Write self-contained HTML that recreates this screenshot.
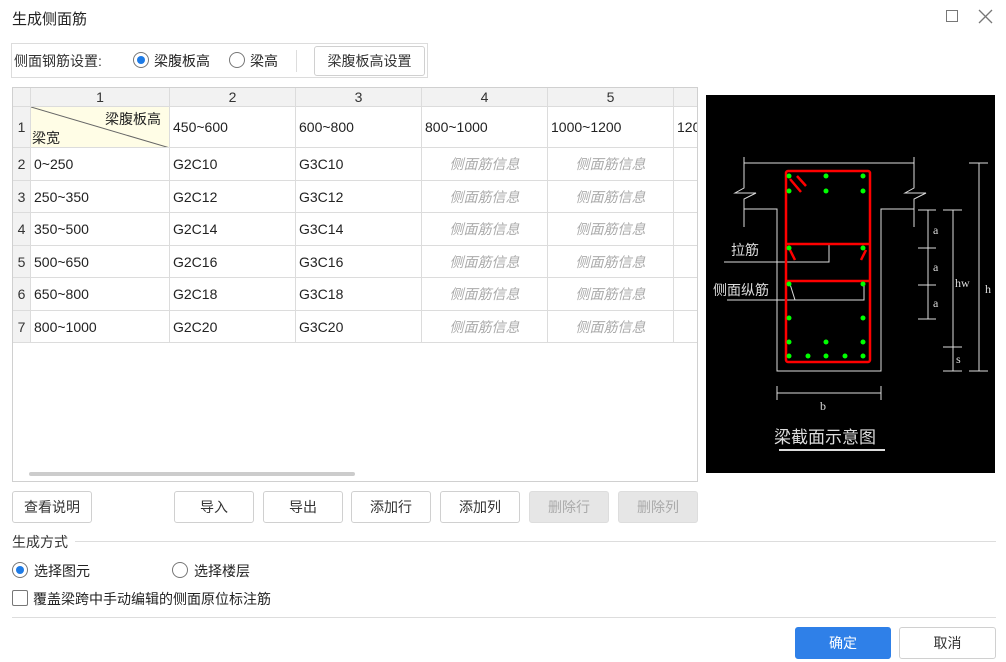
<!DOCTYPE html>
<html><head><meta charset="utf-8"><style>
*{box-sizing:border-box;margin:0;padding:0}
body{width:1006px;height:662px;background:#fff;position:relative;overflow:hidden;font-family:"Liberation Sans","Noto Sans CJK SC",sans-serif;font-size:14px;color:#222}
.a{position:absolute}
.btn{position:absolute;height:32px;border:1px solid #d0d0d0;border-radius:3px;background:#fff;text-align:center;line-height:30px;font-size:14px;color:#333}
.dis{background:#e6e6e6;color:#aaa;border-color:#ddd}
table{border-collapse:collapse;position:absolute;left:12px;top:87px;table-layout:fixed}
td{border:1px solid #dcdcdc;font-size:14px;padding:0 3px;white-space:nowrap;overflow:hidden}
td.h{background:#f2f2f2;text-align:center;color:#333;padding:0}
td.i{color:#aaa;font-style:italic;text-align:center}
.radio{position:absolute;width:16px;height:16px;border:1px solid #777;border-radius:50%;background:#fff}
.radio.on::after{content:"";position:absolute;left:3px;top:3px;width:8px;height:8px;border-radius:50%;background:#1e7be6}
</style></head><body>
<div class="a" style="left:12px;top:8px;font-size:15px;color:#222">生成侧面筋</div>
<div class="a" style="left:946px;top:10px;width:12px;height:12px;border:1px solid #777"></div>
<svg class="a" style="left:978px;top:9px" width="15" height="15"><path d="M1 1L14 14M14 1L1 14" stroke="#777" stroke-width="1.3"/></svg>

<div class="a" style="left:11px;top:43px;width:417px;height:35px;border:1px solid #dcdcdc"></div>
<div class="a" style="left:14px;top:51px;color:#333">侧面钢筋设置:</div>
<div class="radio on" style="left:133px;top:52px"></div>
<div class="a" style="left:154px;top:51px">梁腹板高</div>
<div class="radio" style="left:229px;top:52px"></div>
<div class="a" style="left:250px;top:51px">梁高</div>
<div class="a" style="left:296px;top:50px;width:1px;height:22px;background:#ddd"></div>
<div class="btn" style="left:314px;top:46px;width:111px;height:30px;line-height:28px">梁腹板高设置</div>

<div class="a" style="left:12px;top:87px;width:686px;height:395px;border:1px solid #d0d0d0;overflow:hidden">
<table style="left:-1px;top:-1px;width:719px">
<colgroup><col style="width:18px"><col style="width:139px"><col style="width:126px"><col style="width:126px"><col style="width:126px"><col style="width:126px"><col style="width:58px"></colgroup>
<tr style="height:19px"><td class="h"></td><td class="h">1</td><td class="h">2</td><td class="h">3</td><td class="h">4</td><td class="h">5</td><td class="h"></td></tr>
<tr style="height:41px"><td class="h">1</td><td style="background:#fffde6;position:relative;padding:0"><svg class="a" style="left:0;top:0" width="139" height="41"><line x1="0" y1="0" x2="139" y2="41" stroke="#666"/></svg><span class="a" style="right:8px;top:2px">梁腹板高</span><span class="a" style="left:1px;top:21px">梁宽</span></td><td>450~600</td><td>600~800</td><td>800~1000</td><td>1000~1200</td><td>1200</td></tr>
<tr style="height:33px"><td class="h">2</td><td>0~250</td><td>G2C10</td><td>G3C10</td><td class="i">侧面筋信息</td><td class="i">侧面筋信息</td><td></td></tr>
<tr style="height:32px"><td class="h">3</td><td>250~350</td><td>G2C12</td><td>G3C12</td><td class="i">侧面筋信息</td><td class="i">侧面筋信息</td><td></td></tr>
<tr style="height:33px"><td class="h">4</td><td>350~500</td><td>G2C14</td><td>G3C14</td><td class="i">侧面筋信息</td><td class="i">侧面筋信息</td><td></td></tr>
<tr style="height:32px"><td class="h">5</td><td>500~650</td><td>G2C16</td><td>G3C16</td><td class="i">侧面筋信息</td><td class="i">侧面筋信息</td><td></td></tr>
<tr style="height:33px"><td class="h">6</td><td>650~800</td><td>G2C18</td><td>G3C18</td><td class="i">侧面筋信息</td><td class="i">侧面筋信息</td><td></td></tr>
<tr style="height:32px"><td class="h">7</td><td>800~1000</td><td>G2C20</td><td>G3C20</td><td class="i">侧面筋信息</td><td class="i">侧面筋信息</td><td></td></tr>
</table>
<div class="a" style="left:16px;top:384px;width:326px;height:4px;border-radius:2px;background:#ccc"></div>
</div>

<svg class="a" style="left:0;top:0" width="1006" height="662">
<rect x="706" y="95" width="289" height="378" fill="#000"/>
<g stroke="#ddd" fill="none" stroke-width="1">
<path d="M744 163H914M744 157V188L735 193H756L744 199V227M914 157V188L905 193H926L914 199V227"/>
<path d="M744 209H777V371H881V209H914"/>
<path d="M918 210H936M918 248H936M918 285H936M918 319H936M928 210V319"/>
<path d="M943 210H962M943 347H962M943 371H962M953 210V371"/>
<path d="M969 163H988M969 371H988M979 163V371"/>
<path d="M777 393H881M777 386V400M881 386V400"/>
<path d="M724 262H829V244M727 300H864V284M790 284L795 300"/>
<path d="M779 450H885" stroke-width="2"/>
</g>
<g stroke="#f00" fill="none" stroke-width="2.5">
<rect x="786" y="171" width="84" height="191" rx="2"/>
<path d="M786 244H870M786 281H870M790 179L801 192M797 176L806 186M790 250L795 260M866 250L861 260"/>
</g>
<g fill="#0f0">
<circle cx="789" cy="176" r="2.5"/><circle cx="826" cy="176" r="2.5"/><circle cx="863" cy="176" r="2.5"/>
<circle cx="789" cy="191" r="2.5"/><circle cx="826" cy="191" r="2.5"/><circle cx="863" cy="191" r="2.5"/>
<circle cx="789" cy="248" r="2.5"/><circle cx="863" cy="248" r="2.5"/>
<circle cx="789" cy="284" r="2.5"/><circle cx="863" cy="284" r="2.5"/>
<circle cx="789" cy="318" r="2.5"/><circle cx="863" cy="318" r="2.5"/>
<circle cx="789" cy="342" r="2.5"/><circle cx="826" cy="342" r="2.5"/><circle cx="863" cy="342" r="2.5"/>
<circle cx="789" cy="356" r="2.5"/><circle cx="808" cy="356" r="2.5"/><circle cx="826" cy="356" r="2.5"/><circle cx="845" cy="356" r="2.5"/><circle cx="863" cy="356" r="2.5"/>
</g>
<g fill="#ddd" font-family="Liberation Serif,Noto Serif CJK SC,serif" font-size="12">
<text x="933" y="234">a</text><text x="933" y="271">a</text><text x="933" y="307">a</text>
<text x="955" y="287">hw</text><text x="985" y="293">h</text><text x="956" y="363">s</text><text x="820" y="410">b</text>
<text x="731" y="255" font-family="Noto Sans CJK SC,sans-serif" font-size="14">拉筋</text>
<text x="713" y="295" font-family="Noto Sans CJK SC,sans-serif" font-size="14">侧面纵筋</text>
<text x="774" y="443" font-family="Noto Sans CJK SC,sans-serif" font-size="17">梁截面示意图</text>
</g>
</svg>

<div class="btn" style="left:12px;top:491px;width:80px">查看说明</div>
<div class="btn" style="left:174px;top:491px;width:80px">导入</div>
<div class="btn" style="left:263px;top:491px;width:80px">导出</div>
<div class="btn" style="left:351px;top:491px;width:80px">添加行</div>
<div class="btn" style="left:440px;top:491px;width:80px">添加列</div>
<div class="btn dis" style="left:529px;top:491px;width:80px">删除行</div>
<div class="btn dis" style="left:618px;top:491px;width:80px">删除列</div>

<div class="a" style="left:12px;top:532px;color:#333">生成方式</div>
<div class="a" style="left:75px;top:541px;width:921px;height:1px;background:#ddd"></div>
<div class="radio on" style="left:12px;top:562px"></div>
<div class="a" style="left:34px;top:561px">选择图元</div>
<div class="radio" style="left:172px;top:562px"></div>
<div class="a" style="left:194px;top:561px">选择楼层</div>
<div class="a" style="left:12px;top:590px;width:16px;height:16px;border:1px solid #777;border-radius:2px"></div>
<div class="a" style="left:33px;top:589px">覆盖梁跨中手动编辑的侧面原位标注筋</div>
<div class="a" style="left:12px;top:617px;width:984px;height:1px;background:#ddd"></div>
<div class="btn" style="left:795px;top:627px;width:96px;background:#2f80e8;border-color:#2f80e8;color:#fff">确定</div>
<div class="btn" style="left:899px;top:627px;width:97px">取消</div>
</body></html>
